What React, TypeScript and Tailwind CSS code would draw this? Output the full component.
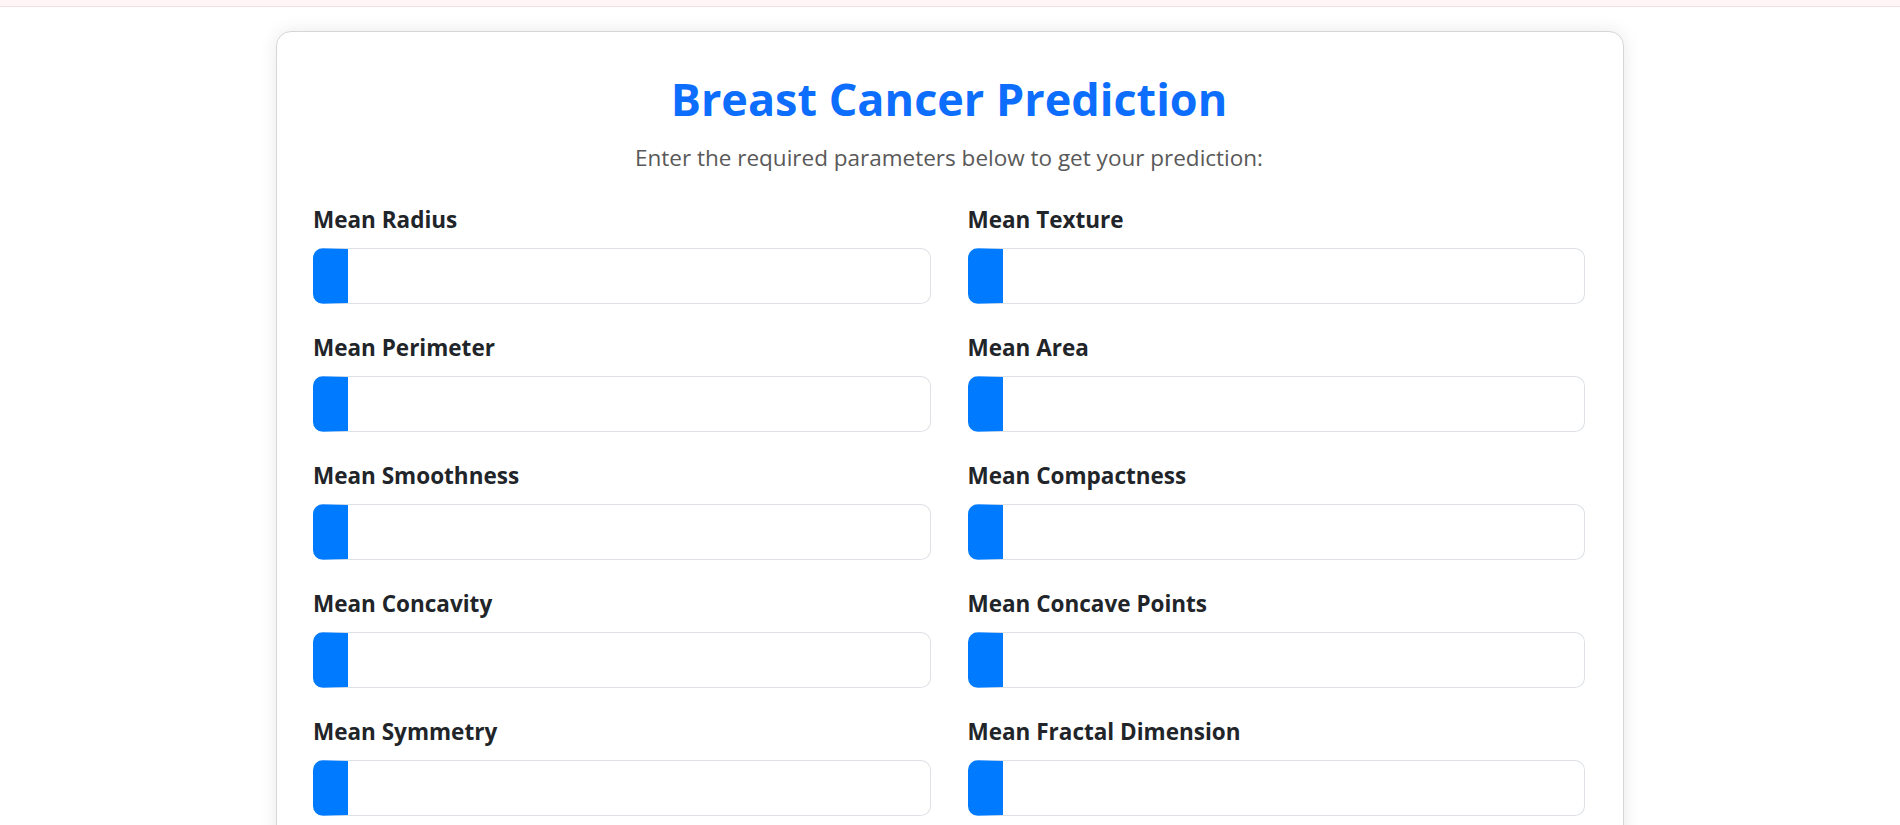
import React from 'react';

const fields = [
  'Mean Radius',
  'Mean Texture',
  'Mean Perimeter',
  'Mean Area',
  'Mean Smoothness',
  'Mean Compactness',
  'Mean Concavity',
  'Mean Concave Points',
  'Mean Symmetry',
  'Mean Fractal Dimension',
];

export default function App() {
  return (
    <div className="min-h-screen bg-white font-['Open_Sans',sans-serif] text-[#212529]">
      <div className="h-[7px] bg-[#fdf5f6] border-b border-[#f3dfe3]" />

      <div className="w-[1348px] mx-auto mt-[24px] mb-10 bg-white border border-[#d6d6d6] rounded-[15px] shadow-[0_0_18px_rgba(0,0,0,0.09)] pl-[36px] pr-[38px] pt-[40px] pb-10">
        <h1 className="text-center text-[45px] leading-[54px] font-bold text-[#0d6efd]">
          Breast Cancer Prediction
        </h1>
        <p className="text-center text-[22.5px] leading-[34px] text-[#595959] mt-[15px] mb-[30px]">
          Enter the required parameters below to get your prediction:
        </p>

        <form className="grid grid-cols-2 gap-x-[37px]">
          {fields.map((f) => (
            <div key={f} className="mb-[29px]">
              <label className="block text-[22.5px] leading-[30px] font-bold mb-[13px]">{f}</label>
              <input
                type="text"
                className="block w-full h-[56px] rounded-[10px] border border-[#dee2e6] border-l-[35px] border-l-[#007bff] bg-white px-3 outline-none"
              />
            </div>
          ))}
          <div className="col-span-2 flex justify-center mt-2">
            <button
              type="button"
              className="bg-[#007bff] text-white text-[22px] font-bold px-10 py-3 rounded-[10px]"
            >
              Predict
            </button>
          </div>
        </form>
      </div>
    </div>
  );
}
